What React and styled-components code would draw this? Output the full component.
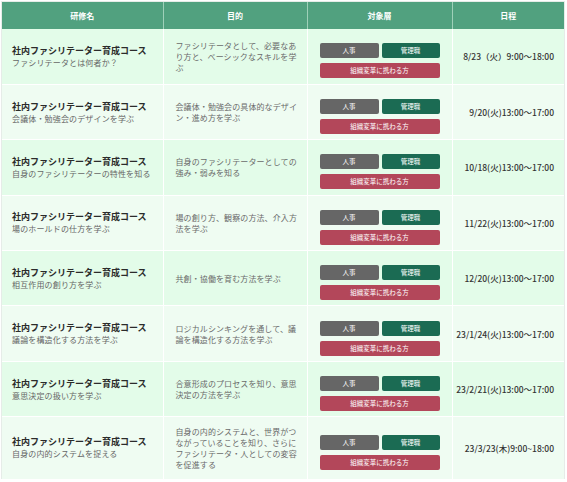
import React from 'react';
import styled, { createGlobalStyle } from 'styled-components';

const courses = [
	{
		sub: 'ファシリテータとは何者か？',
		purpose: 'ファシリテータとして、必要なあり方と、ベーシックなスキルを学ぶ',
		date: '8/23（火）9:00〜18:00',
	},
	{
		sub: '会議体・勉強会のデザインを学ぶ',
		purpose: '会議体・勉強会の具体的なデザイン・進め方を学ぶ',
		date: '9/20(火)13:00〜17:00',
	},
	{
		sub: '自身のファシリテーターの特性を知る',
		purpose: '自身のファシリテーターとしての強み・弱みを知る',
		date: '10/18(火)13:00〜17:00',
	},
	{
		sub: '場のホールドの仕方を学ぶ',
		purpose: '場の創り方、観察の方法、介入方法を学ぶ',
		date: '11/22(火)13:00〜17:00',
	},
	{
		sub: '相互作用の創り方を学ぶ',
		purpose: '共創・協働を育む方法を学ぶ',
		date: '12/20(火)13:00〜17:00',
	},
	{
		sub: '議論を構造化する方法を学ぶ',
		purpose: 'ロジカルシンキングを通して、議論を構造化する方法を学ぶ',
		date: '23/1/24(火)13:00〜17:00',
	},
	{
		sub: '意思決定の扱い方を学ぶ',
		purpose: '合意形成のプロセスを知り、意思決定の方法を学ぶ',
		date: '23/2/21(火)13:00〜17:00',
	},
	{
		sub: '自身の内的システムを捉える',
		purpose: '自身の内的システムと、世界がつながっていることを知り、さらにファシリテータ・人としての変容を促進する',
		date: '23/3/23(木)9:00~18:00',
		tall: true,
	},
];

const App = () => {
	return (
		<>
			<GlobalStyle />
			<Page>
				<Table>
					<colgroup>
						<col style={{ width: 161 }} />
						<col style={{ width: 144 }} />
						<col style={{ width: 145 }} />
						<col style={{ width: 112 }} />
					</colgroup>
					<thead>
						<tr>
							<HeadCell>研修名</HeadCell>
							<HeadCell>目的</HeadCell>
							<HeadCell>対象層</HeadCell>
							<HeadCell>日程</HeadCell>
						</tr>
					</thead>
					<tbody>
						{courses.map((c, i) => (
							<Row key={i} $alt={i % 2 === 1} $tall={c.tall}>
								<NameCell>
									<Title>社内ファシリテーター育成コース</Title>
									<Sub>{c.sub}</Sub>
								</NameCell>
								<PurposeCell>
									<Purpose>{c.purpose}</Purpose>
								</PurposeCell>
								<TargetCell>
									<Badges>
										<Badge $variant="gray">人事</Badge>
										<Badge $variant="green">管理職</Badge>
										<Badge $variant="red" $wide>
											組織変革に携わる方
										</Badge>
									</Badges>
								</TargetCell>
								<DateCell>{c.date}</DateCell>
							</Row>
						))}
					</tbody>
				</Table>
			</Page>
		</>
	);
};

export default App;

const GlobalStyle = createGlobalStyle`
	body {
		margin: 0;
		background: #ffffff;
		font-family: "Noto Sans CJK JP", "Noto Sans", sans-serif;
	}
`;

const Page = styled.div`
	padding: 2px 0 0 2px;
`;

const Table = styled.table`
	width: 562px;
	border-collapse: collapse;
	table-layout: fixed;
	outline: 1px solid #e6ece8;
`;

const HeadCell = styled.th`
	height: 27px;
	padding: 0;
	background: #51a17f;
	color: #ffffff;
	font-size: 8px;
	font-weight: 700;
	text-align: center;
	vertical-align: middle;
	border-left: 1px solid #9fd0b9;
	&:first-child {
		border-left: none;
	}
`;

const Row = styled.tr`
	background: ${(p) => (p.$alt ? '#effcf2' : '#e3fce9')};
	height: ${(p) => (p.$tall ? '62px' : '55.4px')};
	border-top: 1px solid #ffffff;
	&:first-child {
		border-top: none;
	}
	td {
		border-left: 1px solid #ffffff;
		vertical-align: middle;
		padding: 0;
	}
	td:first-child {
		border-left: none;
	}
`;

const NameCell = styled.td`
	padding-left: 10px !important;
`;

const Title = styled.div`
	font-size: 9px;
	font-weight: 700;
	line-height: 12px;
	color: #2b2b2b;
	white-space: nowrap;
`;

const Sub = styled.div`
	font-size: 8px;
	line-height: 11px;
	letter-spacing: 0.15px;
	color: #666666;
	white-space: nowrap;
`;

const PurposeCell = styled.td`
	padding: 0 8px 0 12px !important;
`;

const Purpose = styled.div`
	width: 123px;
	font-size: 8px;
	line-height: 11px;
	letter-spacing: 0.1px;
	color: #6a6a6a;
`;

const TargetCell = styled.td`
	text-align: center;
`;

const Badges = styled.div`
	display: inline-grid;
	grid-template-columns: 59px 58px;
	column-gap: 3px;
	row-gap: 5px;
`;

const badgeColors = {
	gray: '#666666',
	green: '#1b6b53',
	red: '#b3475a',
};

const Badge = styled.span`
	grid-column: ${(p) => (p.$wide ? '1 / span 2' : 'auto')};
	height: 15px;
	border-radius: 2px;
	background: ${(p) => badgeColors[p.$variant]};
	color: #ffffff;
	font-size: 6.5px;
	line-height: 15px;
	text-align: center;
`;

const DateCell = styled.td`
	padding-right: 10px !important;
	text-align: right;
	font-size: 8.5px;
	font-weight: 500;
	color: #333333;
	white-space: nowrap;
`;
